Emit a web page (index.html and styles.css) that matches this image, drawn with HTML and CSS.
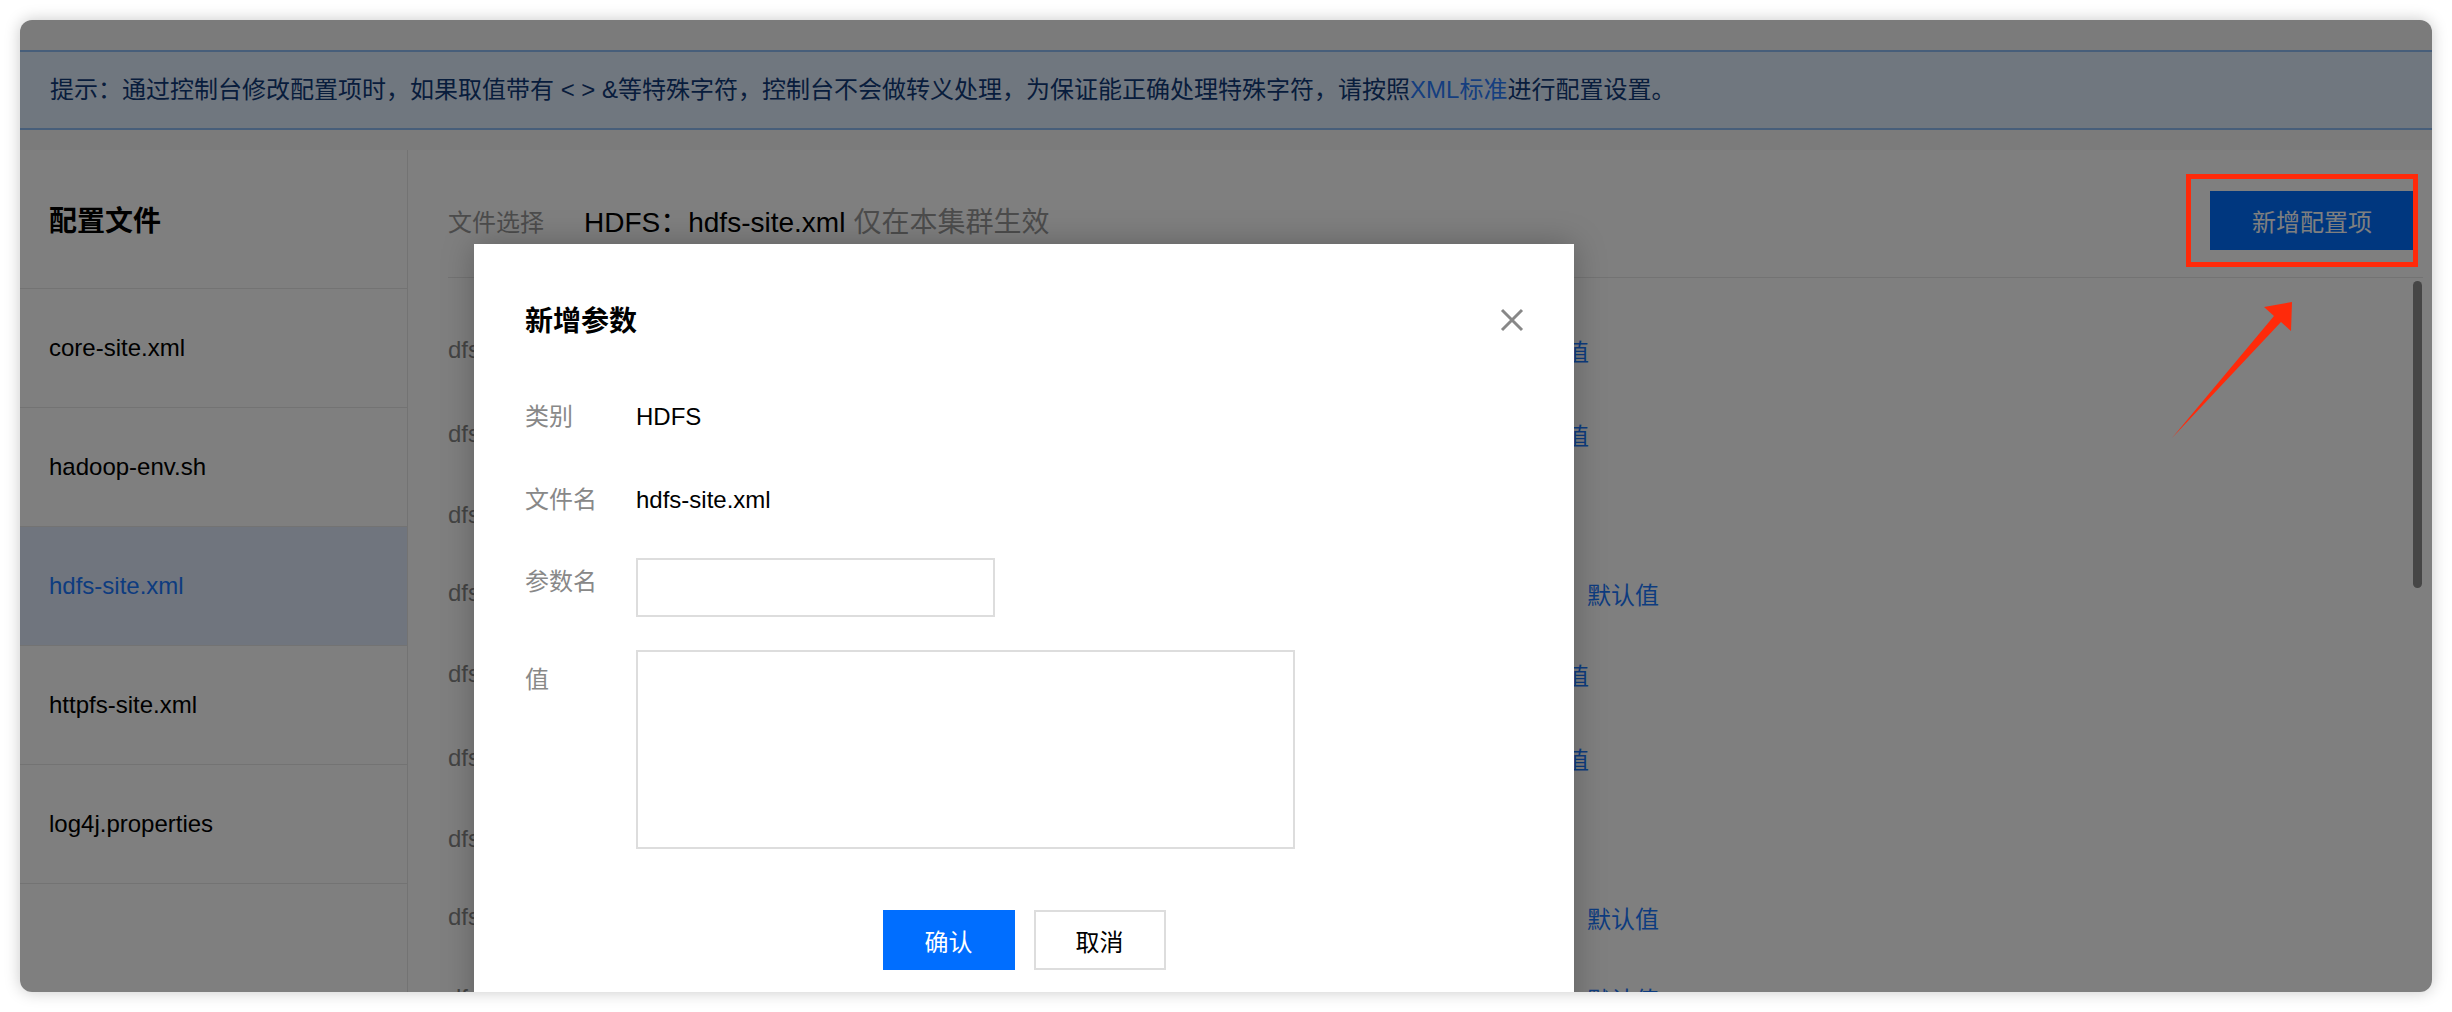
FILE: index.html
```html
<!DOCTYPE html>
<html lang="zh-CN">
<head>
  <meta charset="UTF-8" />
  <title>配置管理</title>
  <link rel="stylesheet" href="styles.css">
</head>
<body>
  <div class="window">
    <div class="tip">提示：通过控制台修改配置项时，如果取值带有 &lt; &gt; &amp;等特殊字符，控制台不会做转义处理，为保证能正确处理特殊字符，请按照<a class="tip-link">XML标准</a>进行配置设置。</div>

    <div class="panel">
      <div class="sidebar">
        <div class="sidebar-title">配置文件</div>
        <div class="sidebar-item">core-site.xml</div>
        <div class="sidebar-item">hadoop-env.sh</div>
        <div class="sidebar-item active">hdfs-site.xml</div>
        <div class="sidebar-item">httpfs-site.xml</div>
        <div class="sidebar-item">log4j.properties</div>
      </div>

      <div class="content">
        <div class="content-head">
          <div class="file-pick">
            <span class="file-pick-label">文件选择</span>
            <span class="file-pick-name">HDFS：hdfs-site.xml</span>
            <span class="file-pick-note">仅在本集群生效</span>
          </div>
          <button class="add-button">新增配置项</button>
        </div>

        <div class="rows">
          <div class="row"><span class="row-name">dfs.replication</span><a class="row-value">恢复默认值</a><span></span></div>
          <div class="row"><span class="row-name">dfs.blocksize</span><a class="row-value">恢复默认值</a><span></span></div>
          <div class="row short"><span class="row-name">dfs.namenode.name.dir</span><span></span><span></span></div>
          <div class="row short"><span class="row-name">dfs.datanode.data.dir</span><span></span><a class="row-op">默认值</a></div>
          <div class="row"><span class="row-name">dfs.permissions.enabled</span><a class="row-value">恢复默认值</a><span></span></div>
          <div class="row"><span class="row-name">dfs.namenode.handler.count</span><a class="row-value">恢复默认值</a><span></span></div>
          <div class="row short"><span class="row-name">dfs.datanode.max.transfer.threads</span><span></span><span></span></div>
          <div class="row short"><span class="row-name">dfs.heartbeat.interval</span><span></span><a class="row-op">默认值</a></div>
          <div class="row"><span class="row-name">dfs.hosts.exclude</span><span></span><a class="row-op">默认值</a></div>
        </div>
      </div>
    </div>

    <div class="scroll-thumb"></div>
    <div class="overlay"></div>

    <div class="dialog">
      <svg class="dialog-close" width="24" height="24" viewBox="0 0 24 24">
        <path d="M2 2 L22 22 M22 2 L2 22" stroke="#888" stroke-width="3" fill="none"/>
      </svg>
      <div class="dialog-title">新增参数</div>

      <div class="field first">
        <div class="field-label">类别</div>
        <div class="field-value">HDFS</div>
      </div>
      <div class="field second">
        <div class="field-label">文件名</div>
        <div class="field-value">hdfs-site.xml</div>
      </div>
      <div class="field third">
        <div class="field-label">参数名</div>
        <input class="field-input" type="text" />
      </div>
      <div class="field fourth">
        <div class="field-label">值</div>
        <textarea class="field-area"></textarea>
      </div>

      <div class="dialog-buttons">
        <button class="btn btn-primary">确认</button>
        <button class="btn">取消</button>
      </div>
    </div>

    <!-- пометки поверх скриншота -->
    <div class="mark-box"></div>
    <svg class="mark-arrow" width="170" height="180" viewBox="0 0 170 180">
      <polygon points="152,27 124,32 134,41 32,163 141,47 151,56" fill="#ff2a0a"/>
    </svg>
  </div>
</body>
</html>
```

FILE: styles.css
```css
body {
  margin: 0;
  padding: 20px;
  background-color: #fff;
  font-family: "Liberation Sans", "Noto Sans CJK SC", sans-serif;
}

.window {
  position: relative;
  width: 2412px;
  height: 972px;
  padding-top: 30px;
  box-sizing: border-box;
  display: flex;
  flex-direction: column;
  background-color: #f6f6f6;
  border-radius: 12px;
  overflow: hidden;
  box-shadow: 0 0 16px rgba(0, 0, 0, 0.22);
}

.tip {
  height: 80px;
  box-sizing: border-box;
  padding-left: 30px;
  line-height: 76px;
  font-size: 24px;
  color: #103a78;
  background-color: #e1eeff;
  border-top: 2px solid #8fbdf5;
  border-bottom: 2px solid #8fbdf5;
  white-space: nowrap;
}

.tip-link {
  color: #2a7dff;
}

.panel {
  flex: 1;
  margin-top: 20px;
  display: flex;
  background-color: #fff;
}

.sidebar {
  width: 388px;
  box-sizing: border-box;
  border-right: 1px solid #e6e6e6;
}

.sidebar-title {
  height: 139px;
  box-sizing: border-box;
  padding-left: 29px;
  display: flex;
  align-items: center;
  font-size: 28px;
  font-weight: bold;
  color: #000;
  border-bottom: 1px solid #e6e6e6;
}

.sidebar-item {
  height: 119px;
  box-sizing: border-box;
  padding-left: 29px;
  display: flex;
  align-items: center;
  font-size: 24px;
  color: #000;
  border-bottom: 1px solid #e6e6e6;
}

.sidebar-item.active {
  color: #1b78ff;
  background-color: #e0ebfd;
}

.content {
  flex: 1;
  padding: 0 9px 0 40px;
}

.content-head {
  height: 128px;
  box-sizing: border-box;
  padding-top: 13px;
  display: flex;
  justify-content: space-between;
  align-items: center;
  border-bottom: 1px solid #e6e6e6;
}

.file-pick {
  display: flex;
  align-items: center;
  white-space: nowrap;
}

.file-pick-label {
  font-size: 24px;
  color: #999;
  margin-right: 40px;
}

.file-pick-name {
  font-size: 28px;
  color: #000;
  margin-right: 8px;
}

.file-pick-note {
  font-size: 28px;
  color: #999;
}

.add-button {
  width: 204px;
  height: 59px;
  margin-right: 9px;
  font-family: inherit;
  font-size: 24px;
  color: #fff;
  background-color: #006eff;
  border: none;
}

.rows {
  padding-top: 30px;
}

.row {
  height: 84px;
  display: grid;
  grid-template-columns: 552px 589px auto;
  align-items: center;
  font-size: 24px;
  white-space: nowrap;
}

.row.short {
  height: 78px;
}

.row-name {
  color: #888;
}

.row-value {
  color: #1b78ff;
  text-align: right;
}

.row-op {
  color: #1b78ff;
  margin-left: -2px;
}

.scroll-thumb {
  position: absolute;
  right: 10px;
  top: 261px;
  width: 9px;
  height: 307px;
  border-radius: 5px;
  background-color: #8c8c8c;
}

.overlay {
  position: absolute;
  top: 0;
  left: 0;
  right: 0;
  bottom: 0;
  background-color: rgba(0, 0, 0, 0.5);
  z-index: 10;
}

/* Модальное окно */
.dialog {
  position: absolute;
  left: 454px;
  top: 224px;
  width: 1100px;
  height: 800px;
  box-sizing: border-box;
  padding: 0 51px;
  background-color: #fff;
  box-shadow: 0 0 30px rgba(0, 0, 0, 0.25);
  z-index: 20;
}

.dialog-close {
  position: absolute;
  top: 64px;
  right: 50px;
}

.dialog-title {
  padding-top: 60px;
  line-height: 36px;
  font-size: 28px;
  font-weight: bold;
  color: #000;
}

.field {
  display: flex;
  align-items: flex-start;
  font-size: 24px;
  line-height: 36px;
}

.field.first { margin-top: 59px; }
.field.second { margin-top: 47px; }
.field.third { margin-top: 40px; }
.field.fourth { margin-top: 33px; }

.field-label {
  width: 111px;
  color: #888;
}

.field.third .field-label { padding-top: 6px; }
.field.fourth .field-label { padding-top: 12px; }

.field-value {
  color: #000;
}

.field-input {
  width: 359px;
  height: 59px;
  box-sizing: border-box;
  border: 2px solid #ddd;
  margin: 0;
}

.field-area {
  width: 659px;
  height: 199px;
  box-sizing: border-box;
  border: 2px solid #ddd;
  margin: 0;
  resize: none;
}

.dialog-buttons {
  margin-top: 61px;
  display: flex;
  justify-content: center;
  gap: 19px;
}

.btn {
  width: 132px;
  height: 60px;
  box-sizing: border-box;
  font-family: inherit;
  font-size: 24px;
  color: #000;
  background-color: #fff;
  border: 2px solid #ddd;
}

.btn-primary {
  color: #fff;
  background-color: #006eff;
  border: none;
}

.mark-box {
  position: absolute;
  left: 2166px;
  top: 154px;
  width: 232px;
  height: 93px;
  box-sizing: border-box;
  border: 5px solid #ff2a0a;
  z-index: 30;
}

.mark-arrow {
  position: absolute;
  left: 2120px;
  top: 255px;
  z-index: 30;
}
```
